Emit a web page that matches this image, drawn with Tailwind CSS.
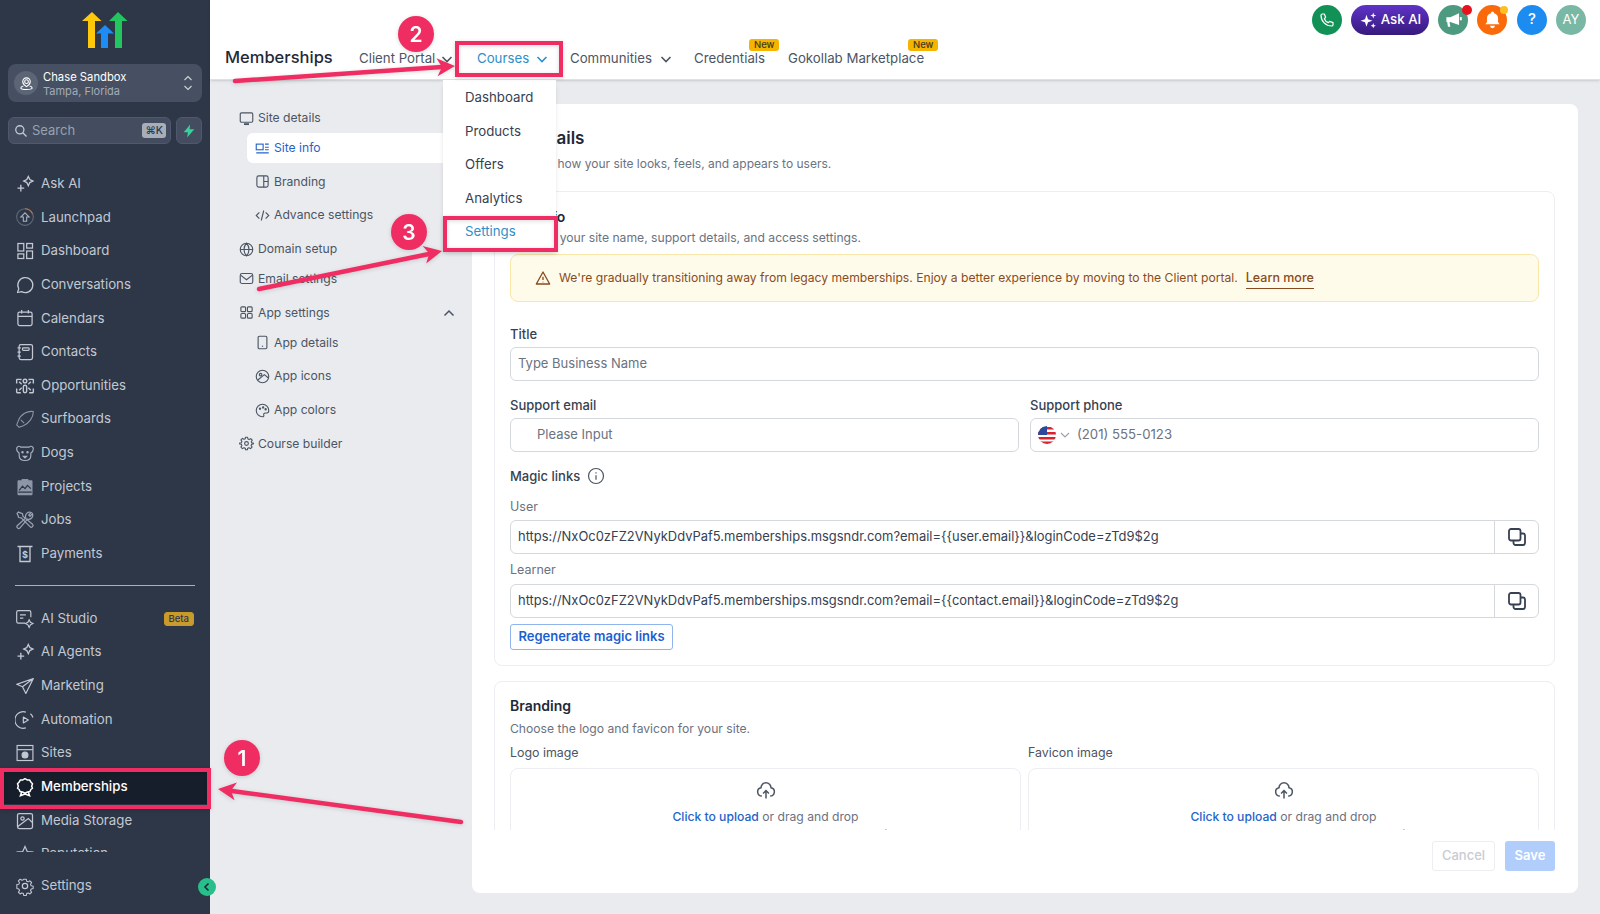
<!DOCTYPE html>
<html lang="en">
<head>
  <meta charset="UTF-8" />
  <title>Memberships</title>
  <script src="https://cdn.jsdelivr.net/npm/@tailwindcss/browser@4"></script>
</head>
<body class="h-[914px] w-[1600px] overflow-hidden bg-[#e9ebef] font-[Inter,sans-serif] text-[#374151]">
<div class="relative flex h-[914px] w-[1600px]">

  <!-- left nav -->
  <aside class="flex h-full w-[210px] shrink-0 flex-col bg-[#2d3748] text-[13.25px] text-[#c3c9d3]">
    <div class="flex h-[64px] justify-center pt-[11px] pr-[0px]">
      <svg width="46" height="38" viewBox="82 11 46 38">
        <path fill="#ffc90b" d="M92 12l9.500 9h-6.500v27h-7v-27h-6z"/>
        <path fill="#1d8cf5" d="M105 25l9 8.500h-6v14.500h-7v-14.500h-5z"/>
        <path fill="#22c55e" d="M118 12l9.500 9h-5.500v27h-7v-27h-6z"/>
      </svg>
    </div>
    <div class="mx-[8px] flex h-[38px] items-center rounded-lg bg-[#465062] pl-[6px] pr-[8px]">
      <div class="flex h-6 w-6 items-center justify-center rounded-full bg-[#5b6576]">
        <svg class="h-[15px] w-[15px] text-white" viewBox="0 0 24 24" fill="none" stroke="currentColor" stroke-width="1.800"><circle cx="12" cy="9" r="3"/><path d="M12 3a6 6 0 0 1 6 6c0 3-3 6-6 8-3-2-6-5-6-8a6 6 0 0 1 6-6z"/><path d="M7 16c-3 .7-4 2-4 3 0 1.500 4 2.500 9 2.500s9-1 9-2.500c0-1-1-2.300-4-3"/></svg>
      </div>
      <div class="ml-[5px] flex-1 pt-[2px] leading-[14px]">
        <div class="text-[11.25px] font-normal text-white">Chase Sandbox</div>
        <div class="text-[11px] text-[#a3abb8]">Tampa, Florida</div>
      </div>
      <svg class="h-[18px] w-[12px] text-[#d1d5db]" viewBox="0 0 12 18" fill="none" stroke="currentColor" stroke-width="1.100"><path d="M2.500 6l3.500-3.500 3.500 3.500M2.500 12l3.500 3.500 3.500-3.500"/></svg>
    </div>
    <div class="mx-[8px] mt-[15px] flex h-[27px] gap-[5px]">
      <div class="flex w-[163px] items-center rounded-md border border-[#4f596b] bg-[#434d5f] pl-[5px] pr-[4px]">
        <svg class="h-[14px] w-[14px] text-[#c3c9d3]" viewBox="0 0 24 24" fill="none" stroke="currentColor" stroke-width="2.200"><circle cx="10" cy="10" r="7"/><path d="M15.500 15.500l6 6"/></svg>
        <span class="ml-[4px] flex-1 text-[13px] text-[#98a1af]">Search</span>
        <span class="rounded-[3px] bg-[#a8aeb9] px-[3px] text-[10.5px] leading-[15px] font-medium text-[#2d3748]">⌘K</span>
      </div>
      <div class="flex w-[26px] items-center justify-center rounded-md border border-[#4f596b] bg-[#434d5f]">
        <svg class="h-[14px] w-[14px]" viewBox="0 0 24 24" fill="#34d399"><path d="M14 1L3 14h7l-1 9 12-14h-8z"/></svg>
      </div>
    </div>

    <nav class="mt-[23px]">
      <a class="flex h-[33.67px] items-center pl-[15px]"><svg class="mr-[6px] h-[20px] w-[20px] text-[#c3c9d3]" viewBox="0 0 24 24" fill="none" stroke="currentColor" stroke-width="1.600"><path d="M16 3l1.800 3.700L21.500 8.500 17.800 10.300 16 14l-1.800-3.700L10.500 8.500l3.700-1.800zM7 13v8M3 17h8"/></svg>Ask AI</a>
      <a class="flex h-[33.67px] items-center pl-[15px]"><svg class="mr-[6px] h-[20px] w-[20px] text-[#aab1bd]" viewBox="0 0 24 24" fill="none" stroke="currentColor" stroke-width="1.300"><circle cx="12" cy="12" r="10" stroke="#5f6a7b"/><path d="M12 2a10 10 0 0 1 9 6" stroke="#c2703d"/><path d="M12 7l5 5h-3v5h-4v-5H7z"/></svg>Launchpad</a>
      <a class="flex h-[33.67px] items-center pl-[15px]"><svg class="mr-[6px] h-[20px] w-[20px]" viewBox="0 0 24 24" fill="none" stroke="currentColor" stroke-width="1.500"><rect x="3.500" y="3" width="7" height="9"/><rect x="14" y="3" width="7" height="5.500"/><rect x="14" y="12" width="7" height="9"/><rect x="3.500" y="15.500" width="7" height="5.500"/></svg>Dashboard</a>
      <a class="flex h-[33.67px] items-center pl-[15px]"><svg class="mr-[6px] h-[20px] w-[20px]" viewBox="0 0 24 24" fill="none" stroke="currentColor" stroke-width="1.500"><path d="M3 21l1.500-4.500A9 9 0 1 1 8 20z" stroke-linejoin="round"/></svg>Conversations</a>
      <a class="flex h-[33.67px] items-center pl-[15px]"><svg class="mr-[6px] h-[20px] w-[20px]" viewBox="0 0 24 24" fill="none" stroke="currentColor" stroke-width="1.500"><rect x="3.500" y="5" width="17" height="16" rx="2"/><path d="M3.500 10h17M8 2.500v4M16 2.500v4"/></svg>Calendars</a>
      <a class="flex h-[33.67px] items-center pl-[15px]"><svg class="mr-[6px] h-[20px] w-[20px]" viewBox="0 0 24 24" fill="none" stroke="currentColor" stroke-width="1.500"><rect x="5" y="3" width="16" height="18" rx="2"/><rect x="9" y="7" width="8" height="3" rx="1"/><path d="M3 7h4M3 12h4M3 17h4"/></svg>Contacts</a>
      <a class="flex h-[33.67px] items-center pl-[15px]"><svg class="mr-[6px] h-[20px] w-[20px]" viewBox="0 0 24 24" fill="none" stroke="currentColor" stroke-width="1.700"><circle cx="12" cy="6" r="2.200"/><rect x="10" y="11" width="4" height="9" rx="2"/><path d="M2 4h5v1M2 4v5M5 7l3 3M22 4h-5v1M22 4v5M19 7l-3 3M2 20h5M2 20v-5M5 17l3-3M22 20h-5M22 20v-5M19 17l-3-3"/></svg>Opportunities</a>
      <a class="flex h-[33.67px] items-center pl-[15px]"><svg class="mr-[6px] h-[20px] w-[20px] text-[#8d96a5]" viewBox="0 0 24 24" fill="none" stroke="currentColor" stroke-width="1.300"><path d="M22 3c-7-1-15 3-18 11l-2 5 3 3 5-2C17 17 22 10 22 3zM7 13l4 4" stroke-linejoin="round"/></svg>Surfboards</a>
      <a class="flex h-[33.67px] items-center pl-[15px]"><svg class="mr-[6px] h-[20px] w-[20px] text-[#aab1bd]" viewBox="0 0 24 24" fill="none" stroke="currentColor" stroke-width="1.400"><path d="M7 5h10c2-2 5-1 5 2 0 2-1 4-3 5v3c0 4-3 6-7 6s-7-2-7-6v-3C3 11 2 9 2 7c0-3 3-4 5-2z" stroke-linejoin="round"/><path d="M10 16h4l-2 2z" fill="currentColor"/><circle cx="9" cy="11" r=".8" fill="currentColor"/><circle cx="15" cy="11" r=".8" fill="currentColor"/></svg>Dogs</a>
      <a class="flex h-[33.67px] items-center pl-[15px]"><svg class="mr-[6px] h-[20px] w-[20px] text-[#8d96a5]" viewBox="0 0 24 24" fill="currentColor"><path d="M4 4h4V2.500h8V4h4a1 1 0 0 1 1 1v16a1 1 0 0 1-1 1H4a1 1 0 0 1-1-1V5a1 1 0 0 1 1-1z"/><path d="M5 16l4-5 3 3 3-4 4 4M4 18h16" fill="none" stroke="#2d3748" stroke-width="1.500"/></svg>Projects</a>
      <a class="flex h-[33.67px] items-center pl-[15px]"><svg class="mr-[6px] h-[20px] w-[20px] text-[#99a2b0]" viewBox="0 0 24 24" fill="none" stroke="currentColor" stroke-width="1.500"><path d="M4 2.500L2.500 4l2 5 3 .5L18 20a2 2 0 0 0 3-3L9.500 7.500 9 4.500z"/><path d="M21 4.500L18 7.500 16.500 6 19.500 3A5 5 0 0 0 13 9.500L3 18.500a2 2 0 0 0 3 3L15 11a5 5 0 0 0 6-6.500z"/></svg>Jobs</a>
      <a class="flex h-[33.67px] items-center pl-[15px]"><svg class="mr-[6px] h-[20px] w-[20px]" viewBox="0 0 24 24" fill="none" stroke="currentColor" stroke-width="1.600"><path d="M3 3h18M6 3v18h12V3"/><text x="12" y="16.500" font-size="11" font-weight="700" text-anchor="middle" fill="currentColor" stroke="none">$</text></svg>Payments</a>
    </nav>

    <div class="mx-[15px] mt-[14px] mb-[16px] h-px shrink-0 bg-[#a9b1be]"></div>

    <nav class="h-[250px] overflow-hidden">
      <a class="flex h-[33.67px] items-center pl-[15px]"><svg class="mr-[6px] h-[20px] w-[20px]" viewBox="0 0 24 24" fill="none" stroke="currentColor" stroke-width="1.400"><path d="M12 17H4a2 2 0 0 1-2-2V4a2 2 0 0 1 2-2h13a2 2 0 0 1 2 2v6M6 7h7M6 11h4"/><path d="M17 13l1.500 3 3 1.500-3 1.500-1.500 3-1.500-3-3-1.500 3-1.500z"/></svg>AI Studio<span class="mr-[16px] ml-auto rounded-[3px] border border-[#c79a26] bg-[#c99a2e] px-[4px] text-[9.5px] leading-[12px] font-medium text-[#2d3748]">Beta</span></a>
      <a class="flex h-[33.67px] items-center pl-[15px]"><svg class="mr-[6px] h-[20px] w-[20px] text-[#c3c9d3]" viewBox="0 0 24 24" fill="none" stroke="currentColor" stroke-width="1.600"><path d="M16 3l1.800 3.700L21.500 8.500 17.800 10.300 16 14l-1.800-3.700L10.500 8.500l3.700-1.800zM7 13v8M3 17h8"/></svg>AI Agents</a>
      <a class="flex h-[33.67px] items-center pl-[15px]"><svg class="mr-[6px] h-[20px] w-[20px]" viewBox="0 0 24 24" fill="none" stroke="currentColor" stroke-width="1.400"><path d="M22 3L2 10l7 3 4 8zM22 3L9 13" stroke-linejoin="round"/></svg>Marketing</a>
      <a class="flex h-[33.67px] items-center pl-[15px]"><svg class="mr-[6px] h-[20px] w-[20px]" viewBox="0 0 24 24" fill="none" stroke="currentColor" stroke-width="1.400"><path d="M13 2.500a10 10 0 1 0 0 19M21.500 9a10 10 0 0 0-3-4.500"/><path d="M10 8.500l6 3.500-6 3.500z" stroke-linejoin="round"/></svg>Automation</a>
      <a class="flex h-[33.67px] items-center pl-[15px]"><svg class="mr-[6px] h-[20px] w-[20px]" viewBox="0 0 24 24" fill="none" stroke="currentColor" stroke-width="1.400"><rect x="2.500" y="3" width="19" height="18"/><path d="M2.500 8h19"/><circle cx="12" cy="14.500" r="3.500" fill="currentColor"/></svg>Sites</a>
      <a class="flex h-[33.67px] items-center bg-[#171e2b] pl-[15px] font-medium text-white"><svg class="mr-[6px] h-[20px] w-[20px]" viewBox="0 0 24 24" fill="none" stroke="currentColor" stroke-width="1.800"><path d="M12 2l2.500 1.500h3l1.500 2.500 2 2-1 3 1 2.500-2 1.500-1 2.500-3 .5-3 1.500-3-1.500-3-.5-1-2.500-2-1.500 1-2.500-1-3 2-2 1.500-2.500h3z" stroke-linejoin="round"/><path d="M8 18l-1.500 4.500 5.500-2 5.500 2L16 18"/></svg>Memberships</a>
      <a class="flex h-[33.67px] items-center pl-[15px]"><svg class="mr-[6px] h-[20px] w-[20px]" viewBox="0 0 24 24" fill="none" stroke="currentColor" stroke-width="1.500"><rect x="3" y="3" width="18" height="18" rx="2"/><circle cx="9" cy="9" r="2"/><path d="M3 19l13-10 5 5"/></svg>Media Storage</a>
      <a class="flex h-[33.67px] items-center pl-[15px]"><svg class="mr-[6px] h-[20px] w-[20px]" viewBox="0 0 24 24" fill="none" stroke="currentColor" stroke-width="1.400"><path d="M12 3l2.700 6 6.300.6-4.800 4.200 1.500 6.200L12 16.700 6.300 20l1.500-6.200L3 9.600 9.300 9z"/></svg>Reputation</a>
    </nav>

    <a class="mt-[17px] flex h-[34px] items-center pl-[15px]"><svg class="mr-[6px] h-[20px] w-[20px]" viewBox="0 0 24 24" fill="none" stroke="currentColor" stroke-width="1.500"><circle cx="12" cy="12" r="3.200"/><path d="M10.300 2.500h3.400l.6 2.800 2 .9 2.500-1.500 2.400 2.400-1.500 2.500.9 2 2.800.6v3.400l-2.800.6-.9 2 1.500 2.500-2.400 2.400-2.500-1.500-2 .9-.6 2.800h-3.400l-.6-2.800-2-.9-2.500 1.500-2.400-2.400 1.500-2.500-.9-2-2.800-.6V10l2.800-.6.900-2-1.500-2.500 2.400-2.400 2.500 1.500 2-.9z" transform="translate(1.700 1.700) scale(.86)" stroke-linejoin="round"/></svg>Settings</a>
  </aside>

  <!-- right side -->
  <div class="flex min-w-0 flex-1 flex-col">
    <header class="relative z-10 h-[80px] shrink-0 border-b border-[#dfe1e5] bg-white shadow-sm">
      <div class="flex h-[38px] items-center justify-end gap-[9px] pt-[1px] pr-[14px]">
        <div class="flex h-[30px] w-[30px] items-center justify-center rounded-full bg-[#119155]">
          <svg class="h-[16px] w-[16px] text-white" viewBox="0 0 24 24" fill="none" stroke="currentColor" stroke-width="1.800"><path d="M5 3h3l2 5-2 2c1 2.500 3.500 5 6 6l2-2 5 2v3a2 2 0 0 1-2 2C10 21 3 14 3 5a2 2 0 0 1 2-2z" stroke-linejoin="round"/></svg>
        </div>
        <div class="flex h-[30px] w-[78px] items-center justify-center gap-[4px] rounded-full bg-gradient-to-b from-[#5f33c9] to-[#371a7c] text-[13.25px] font-medium text-white">
          <svg class="h-[18px] w-[18px]" viewBox="0 0 24 24" fill="currentColor"><path d="M10 5l2 6 6 2-6 2-2 6-2-6-6-2 6-2zM19 2l1 3 3 1-3 1-1 3-1-3-3-1 3-1zM19 16l1 2.500 2.500 1-2.500 1-1 2.500-1-2.500-2.500-1 2.500-1z"/></svg>
          Ask AI
        </div>
        <div class="relative flex h-[30px] w-[30px] items-center justify-center rounded-full bg-[#4e9a80]">
          <svg class="h-[19px] w-[19px] text-white" viewBox="0 0 24 24" fill="currentColor"><path d="M3 9h5l11-5v15L8 15H7l1 6H5l-1-6H3z"/><rect x="20" y="9" width="2.500" height="4"/></svg>
          <span class="absolute top-[0px] right-[-4px] h-[10px] w-[10px] rounded-full bg-[#e8111e]"></span>
        </div>
        <div class="relative flex h-[30px] w-[30px] items-center justify-center rounded-full bg-[#fb6a0a]">
          <svg class="h-[19px] w-[19px] text-white" viewBox="0 0 24 24" fill="currentColor"><path d="M12 2a2 2 0 0 1 2 2 7 7 0 0 1 5 7v4l2 3H3l2-3v-4a7 7 0 0 1 5-7 2 2 0 0 1 2-2zM9 20h6a3 3 0 0 1-6 0z"/></svg>
          <span class="absolute top-[1px] right-[-1px] h-[8px] w-[8px] rounded-full bg-[#fbbf24]"></span>
        </div>
        <div class="ml-[1px] flex h-[30px] w-[30px] items-center justify-center rounded-full bg-[#1c8cf0] text-[15px] font-medium text-white">?</div>
        <div class="flex h-[30px] w-[30px] items-center justify-center rounded-full bg-[#7ab8a6] text-[13px] text-white">AY</div>
      </div>
      <div class="flex h-[42px] items-center pl-[15px] text-[13.25px] text-[#4b5563]">
        <h1 class="mb-[5px] w-[134px] text-[16.5px] leading-[32px] font-medium text-[#1f2937]">Memberships</h1>
        <div class="flex w-[118px] items-center">Client Portal<svg class="ml-[6px] h-[10px] w-[12px]" viewBox="0 0 12 10" fill="none" stroke="currentColor" stroke-width="1.600"><path d="M1.500 3l4.500 4.500L10.500 3"/></svg></div>
        <div class="flex w-[93px] items-center text-[#2f8fc9]">Courses<svg class="ml-[7px] h-[10px] w-[12px]" viewBox="0 0 12 10" fill="none" stroke="currentColor" stroke-width="1.600"><path d="M1.500 3l4.500 4.500L10.500 3"/></svg></div>
        <div class="flex w-[124px] items-center">Communities<svg class="ml-[8px] h-[10px] w-[12px]" viewBox="0 0 12 10" fill="none" stroke="currentColor" stroke-width="1.600"><path d="M1.500 3l4.500 4.500L10.500 3"/></svg></div>
        <div class="relative w-[94px]">Credentials<span class="absolute top-[-10px] left-[55px] rounded-[3px] bg-[#f5b400] px-[5px] text-[9.5px] leading-[12px] font-medium text-[#3f3a1c]">New</span></div>
        <div class="relative">Gokollab Marketplace<span class="absolute top-[-10px] left-[120px] rounded-[3px] bg-[#f5b400] px-[5px] text-[9.5px] leading-[12px] font-medium text-[#3f3a1c]">New</span></div>
      </div>
    </header>

    <div class="flex min-h-0 flex-1">
      <!-- settings menu -->
      <div class="w-[262px] shrink-0 pt-[22px] pl-[29px] text-[12.15px] text-[#4b5563]">
        <div class="flex h-[31px] items-center gap-[4px] pt-[1px]"><svg class="h-[15px] w-[15px]" viewBox="0 0 24 24" fill="none" stroke="currentColor" stroke-width="1.800"><rect x="2" y="3" width="20" height="15" rx="2"/><path d="M8 21h8" stroke-width="3"/></svg>Site details</div>
        <div class="ml-[8px] flex h-[30px] items-center gap-[4px] rounded-l-md bg-white pl-[8px] text-[#2563c9]"><svg class="h-[15px] w-[15px]" viewBox="0 0 24 24" fill="none" stroke="currentColor" stroke-width="1.800"><rect x="2" y="5" width="11" height="9"/><path d="M16 5h6M16 10h6M2 19h20M16 14h6"/></svg>Site info</div>
        <div class="mt-[2px] ml-[16px] flex h-[33.67px] items-center gap-[4px]"><svg class="h-[15px] w-[15px]" viewBox="0 0 24 24" fill="none" stroke="currentColor" stroke-width="1.800"><rect x="3" y="3" width="18" height="18" rx="3"/><path d="M14 3v18M14 12h7"/></svg>Branding</div>
        <div class="ml-[16px] flex h-[33.67px] items-center gap-[4px]"><svg class="h-[15px] w-[15px]" viewBox="0 0 24 24" fill="none" stroke="currentColor" stroke-width="1.800"><path d="M7 7l-5 5 5 5M17 7l5 5-5 5M14 4l-4 16"/></svg>Advance settings</div>
        <div class="flex h-[33.67px] items-center gap-[4px]"><svg class="h-[15px] w-[15px]" viewBox="0 0 24 24" fill="none" stroke="currentColor" stroke-width="1.800"><circle cx="12" cy="12" r="10"/><path d="M2 12h20M12 2c3 3 4 6.500 4 10s-1 7-4 10c-3-3-4-6.500-4-10s1-7 4-10z"/></svg>Domain setup</div>
        <div class="flex h-[26px] items-center gap-[4px]"><svg class="h-[15px] w-[15px]" viewBox="0 0 24 24" fill="none" stroke="currentColor" stroke-width="1.800"><rect x="2" y="4" width="20" height="16" rx="3"/><path d="M3 7l9 7 9-7"/></svg>Email settings</div>
        <div class="mt-[4px] flex h-[33.67px] items-center gap-[4px] pr-[17px]"><svg class="h-[15px] w-[15px]" viewBox="0 0 24 24" fill="none" stroke="currentColor" stroke-width="1.800"><rect x="3" y="3" width="7.500" height="7.500" rx="1.500"/><rect x="13.500" y="3" width="7.500" height="7.500" rx="1.500"/><rect x="3" y="13.500" width="7.500" height="7.500" rx="1.500"/><rect x="13.500" y="13.500" width="7.500" height="7.500" rx="1.500"/></svg>App settings<svg class="ml-auto h-[10px] w-[12px]" viewBox="0 0 12 10" fill="none" stroke="currentColor" stroke-width="1.500"><path d="M1.500 7.500L6 3l4.500 4.500"/></svg></div>
        <div class="ml-[16px] flex h-[26px] items-center gap-[4px]"><svg class="h-[15px] w-[15px]" viewBox="0 0 24 24" fill="none" stroke="currentColor" stroke-width="1.800"><rect x="5" y="2" width="14" height="20" rx="2"/><path d="M11 18h2"/></svg>App details</div>
        <div class="mt-[4px] ml-[16px] flex h-[33.67px] items-center gap-[4px]"><svg class="h-[15px] w-[15px]" viewBox="0 0 24 24" fill="none" stroke="currentColor" stroke-width="1.800"><circle cx="12" cy="12" r="10"/><circle cx="9" cy="9" r="2"/><path d="M4 18l11-9 6 5"/></svg>App icons</div>
        <div class="ml-[16px] flex h-[33.67px] items-center gap-[4px]"><svg class="h-[15px] w-[15px]" viewBox="0 0 24 24" fill="none" stroke="currentColor" stroke-width="1.800"><path d="M12 2a10 10 0 1 0 0 20c2 0 2.500-1.500 2-3-.5-1.800.5-3 2.500-3H19c2 0 3-2 3-4 0-5.500-4.500-10-10-10z"/><circle cx="8" cy="9" r="1" fill="currentColor"/><circle cx="13" cy="7" r="1" fill="currentColor"/><circle cx="17" cy="10" r="1" fill="currentColor"/></svg>App colors</div>
        <div class="flex h-[33.67px] items-center gap-[4px]"><svg class="h-[15px] w-[15px]" viewBox="0 0 24 24" fill="none" stroke="currentColor" stroke-width="1.800"><circle cx="12" cy="12" r="3"/><path d="M10.300 2h3.400l.6 2.800 2 .9 2.500-1.500 2.400 2.400-1.500 2.500.9 2L23 11.300v1.400l-2.700.6-.9 2 1.500 2.500-2.400 2.400-2.500-1.500-2 .9-.6 2.400h-2.800l-.6-2.400-2-.9-2.500 1.500-2.400-2.400 1.500-2.500-.9-2L1 12.700v-1.400l2.700-.6.900-2-1.500-2.500 2.400-2.400 2.500 1.500 2-.9z" stroke-linejoin="round"/></svg>Course builder</div>
      </div>

      <!-- card -->
      <main class="mt-[24px] flex h-[789px] w-[1106px] flex-col overflow-hidden rounded-lg bg-white">
        <div class="h-[726px] shrink-0 overflow-hidden pt-[22px] pr-[23px] pl-[22px]">
          <h2 class="text-[17px] leading-[24px] font-semibold text-[#1f2937]">Site details</h2>
          <p class="mt-[5px] text-[12px] leading-[18px] text-[#6b7280]">Customize how your site looks, feels, and appears to users.</p>

          <section class="mt-[18px] h-[475px] rounded-lg border border-[#eceef1] px-[15px] pt-[15px]">
            <h3 class="text-[14px] leading-[20px] font-semibold text-[#1f2937]">Site info</h3>
            <p class="mt-[2px] text-[12.15px] leading-[18px] text-[#6b7280]">Manage your site name, support details, and access settings.</p>
            <div class="mt-[7px] flex h-[48px] items-center gap-[8px] rounded-lg border border-[#f8e7a8] bg-[#fffbeb] pl-[24px] text-[12.15px] text-[#8a4b1c]">
              <svg class="h-[16px] w-[16px]" viewBox="0 0 24 24" fill="none" stroke="currentColor" stroke-width="2"><path d="M12 3l10 18H2z" stroke-linejoin="round"/><path d="M12 10v5M12 17.500v1"/></svg>
              <span>We're gradually transitioning away from legacy memberships. Enjoy a better experience by moving to the Client portal.</span>
              <span class="mt-[2px] border-b border-[#8a4b1c] text-[12.5px] font-medium">Learn more</span>
            </div>
            <div class="mt-[23px] text-[13px] leading-[18px] font-medium text-[#374151]">Title</div>
            <div class="mt-[4px] flex h-[34px] items-center rounded-md border border-[#d5d8dd] pl-[7px] text-[13px] text-[#6b7280]">Type Business Name</div>
            <div class="mt-[15px] flex gap-[11px]">
              <div class="w-[509px]">
                <div class="text-[13px] leading-[18px] font-medium text-[#374151]">Support email</div>
                <div class="mt-[4px] flex h-[34px] items-center rounded-md border border-[#d5d8dd] pl-[26px] text-[13px] text-[#6b7280]">Please Input</div>
              </div>
              <div class="flex-1">
                <div class="text-[13px] leading-[18px] font-medium text-[#374151]">Support phone</div>
                <div class="mt-[4px] flex h-[34px] items-center rounded-md border border-[#d5d8dd] pl-[7px] text-[13.2px] text-[#6b7280]">
                  <svg class="h-[18px] w-[18px]" viewBox="0 0 18 18"><clipPath id="flag"><circle cx="9" cy="9" r="9"/></clipPath><g clip-path="url(#flag)"><rect width="18" height="18" fill="#fff"/><path d="M0 1h18v2.500H0zM0 6h18v2.500H0zM0 11h18v2.500H0zM0 15.500h18V18H0z" fill="#d8232f"/><rect width="9" height="9" fill="#2b4a9b"/></g></svg>
                  <svg class="mr-[7px] ml-[4px] h-[8px] w-[10px] text-[#9ca3af]" viewBox="0 0 10 8" fill="none" stroke="currentColor" stroke-width="1.200"><path d="M1 2l4 4 4-4"/></svg>
                  (201) 555-0123
                </div>
              </div>
            </div>
            <div class="mt-[14px] flex items-center gap-[7px] text-[13px] leading-[20px] font-medium text-[#374151]">Magic links
              <svg class="h-[18px] w-[18px] text-[#4b5563]" viewBox="0 0 24 24" fill="none" stroke="currentColor" stroke-width="1.600"><circle cx="12" cy="12" r="10"/><path d="M12 11v6M12 7v1.500"/></svg>
            </div>
            <div class="mt-[12px] text-[12.5px] leading-[18px] text-[#6b7280]">User</div>
            <div class="mt-[4px] flex h-[34px] items-center rounded-md border border-[#d5d8dd] text-[12.95px] text-[#374151]">
              <span class="flex-1 pl-[7px]">https://NxOc0zFZ2VNykDdvPaf5.memberships.msgsndr.com?email={{user.email}}&amp;loginCode=zTd9$2g</span>
              <span class="flex h-full w-[44px] items-center justify-center border-l border-[#d5d8dd]"><svg class="h-[20px] w-[20px]" viewBox="0 0 20 20" fill="none" stroke="#374151" stroke-width="1.800"><rect x="2" y="2" width="11.500" height="11.500" rx="2"/><path d="M13.500 6.500H16a2 2 0 0 1 2 2V16a2 2 0 0 1-2 2H8.500a2 2 0 0 1-2-2v-2.500"/></svg></span>
            </div>
            <div class="mt-[7px] text-[12.5px] leading-[18px] text-[#6b7280]">Learner</div>
            <div class="mt-[5px] flex h-[34px] items-center rounded-md border border-[#d5d8dd] text-[12.95px] text-[#374151]">
              <span class="flex-1 pl-[7px]">https://NxOc0zFZ2VNykDdvPaf5.memberships.msgsndr.com?email={{contact.email}}&amp;loginCode=zTd9$2g</span>
              <span class="flex h-full w-[44px] items-center justify-center border-l border-[#d5d8dd]"><svg class="h-[20px] w-[20px]" viewBox="0 0 20 20" fill="none" stroke="#374151" stroke-width="1.800"><rect x="2" y="2" width="11.500" height="11.500" rx="2"/><path d="M13.500 6.500H16a2 2 0 0 1 2 2V16a2 2 0 0 1-2 2H8.500a2 2 0 0 1-2-2v-2.500"/></svg></span>
            </div>
            <button class="mt-[6px] h-[26px] w-[163px] rounded-[3px] border border-[#8fb4ee] text-[13px] font-semibold text-[#1d5fd0]">Regenerate magic links</button>
          </section>

          <section class="mt-[15px] h-[300px] rounded-lg border border-[#eceef1] px-[15px] pt-[14px]">
            <h3 class="text-[14px] leading-[20px] font-semibold text-[#1f2937]">Branding</h3>
            <p class="mt-[4px] text-[12.15px] leading-[18px] text-[#6b7280]">Choose the logo and favicon for your site.</p>
            <div class="mt-[6px] flex gap-[7px]">
              <div class="w-[511px]">
                <div class="text-[12.4px] leading-[18px] text-[#4b5563]">Logo image</div>
                <div class="mt-[6px] flex h-[120px] flex-col items-center rounded-lg border border-[#eceef1] pt-[12px]">
                  <svg class="h-[20px] w-[20px] text-[#4b5563]" viewBox="0 0 24 24" fill="none" stroke="currentColor" stroke-width="1.800"><path d="M7 18a5 5 0 0 1-1-9.900 6 6 0 0 1 12 0A5 5 0 0 1 17 18M12 21v-9M8.500 15l3.500-3.500 3.500 3.500"/></svg>
                  <p class="mt-[7px] text-[12.15px] leading-[18px] text-[#6b7280]"><span class="font-medium text-[#2563c9]">Click to upload</span> or drag and drop</p>
                  <p class="mt-[2px] text-[12px] leading-[14px] text-[#9ca3af]">SVG, PNG, JPG or GIF (max 2 Mb, 512x512)</p>
                </div>
              </div>
              <div class="w-[511px]">
                <div class="text-[12.4px] leading-[18px] text-[#4b5563]">Favicon image</div>
                <div class="mt-[6px] flex h-[120px] flex-col items-center rounded-lg border border-[#eceef1] pt-[12px]">
                  <svg class="h-[20px] w-[20px] text-[#4b5563]" viewBox="0 0 24 24" fill="none" stroke="currentColor" stroke-width="1.800"><path d="M7 18a5 5 0 0 1-1-9.900 6 6 0 0 1 12 0A5 5 0 0 1 17 18M12 21v-9M8.500 15l3.500-3.500 3.500 3.500"/></svg>
                  <p class="mt-[7px] text-[12.15px] leading-[18px] text-[#6b7280]"><span class="font-medium text-[#2563c9]">Click to upload</span> or drag and drop</p>
                  <p class="mt-[2px] text-[12px] leading-[14px] text-[#9ca3af]">SVG, PNG, JPG or GIF (max 2 Mb, 512x512)</p>
                </div>
              </div>
            </div>
          </section>
        </div>
        <div class="flex justify-end gap-[10px] pt-[11px] pr-[23px]">
          <button class="h-[30px] w-[63px] rounded-[3px] border border-[#eceef1] text-[13px] font-medium text-[#c9ccd1]">Cancel</button>
          <button class="h-[30px] w-[50px] rounded-[3px] bg-[#b1cdfb] text-[13px] font-semibold text-white">Save</button>
        </div>
      </main>
    </div>
  </div>

  <!-- Courses dropdown -->
  <div class="absolute top-[80px] left-[443px] z-20 h-[170px] w-[113px] bg-white pt-[1px] pl-[22px] text-[13.25px] text-[#374151] shadow-md">
    <div class="flex h-[34px] items-center">Dashboard</div>
    <div class="flex h-[33.5px] items-center">Products</div>
    <div class="flex h-[33.5px] items-center">Offers</div>
    <div class="flex h-[33.5px] items-center">Analytics</div>
    <div class="flex h-[33.5px] items-center text-[#2f8fc9]">Settings</div>
  </div>

  <!-- tutorial markup over the page -->
  <svg class="absolute top-0 left-0 z-30 drop-shadow-sm" width="1600" height="914" viewBox="0 0 1600 914" fill="none">
    <rect x="2" y="770" width="207" height="37" stroke="#ef2d62" stroke-width="4"/>
    <rect x="457" y="43" width="104" height="32" stroke="#ef2d62" stroke-width="4"/>
    <rect x="445" y="218" width="111" height="32" stroke="#ef2d62" stroke-width="4"/>
    <g stroke="#ef2d62" stroke-width="4.500" stroke-linecap="round">
      <path d="M235 81L442 67"/>
      <path d="M259 289L429 254"/>
      <path d="M461 822L232 791"/>
    </g>
    <g fill="#ef2d62">
      <path d="M455 66L437.600 76.200 442 66.900 436.400 58.200z"/>
      <path d="M442 251L426.200 263.500 429.300 253.600 422.600 245.900z"/>
      <path d="M218 789L237 782.500 230.900 790.800 234.600 800.300z"/>
      <circle cx="416" cy="34" r="18"/>
      <circle cx="409" cy="232" r="18"/>
      <circle cx="242" cy="758" r="18"/>
    </g>
    <g fill="#fff" font-family="Inter, sans-serif" font-size="21" font-weight="600" text-anchor="middle">
      <text x="416" y="42">2</text>
      <text x="409" y="240">3</text>
      <text x="242" y="766">1</text>
    </g>
  </svg>

  <!-- collapse toggle -->
  <div class="absolute top-[878px] left-[198px] z-30 flex h-[18px] w-[18px] items-center justify-center rounded-full bg-[#27c08a]">
    <svg class="h-[10px] w-[10px] text-[#1f2937]" viewBox="0 0 10 10" fill="none" stroke="currentColor" stroke-width="1.600"><path d="M6.500 1.500L3 5l3.500 3.500"/></svg>
  </div>
</div>
</body>
</html>
